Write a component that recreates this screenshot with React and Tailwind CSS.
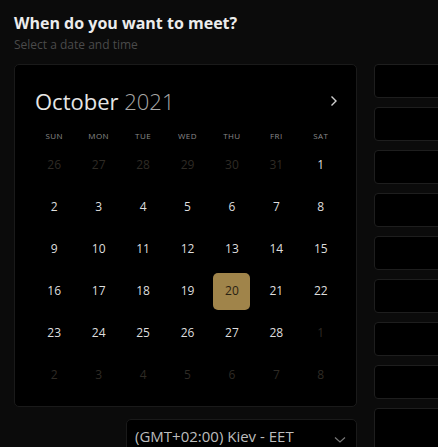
import React from 'react';

const weekdays = ['SUN', 'MON', 'TUE', 'WED', 'THU', 'FRI', 'SAT'];

const days = [
  [26, 27, 28, 29, 30, 31, 1],
  [2, 3, 4, 5, 6, 7, 8],
  [9, 10, 11, 12, 13, 14, 15],
  [16, 17, 18, 19, 20, 21, 22],
  [23, 24, 25, 26, 27, 28, 1],
  [2, 3, 4, 5, 6, 7, 8],
];

const isOutside = (row, d) => (row === 0 && d > 7) || (row >= 4 && d < 15);

const App = () => {
  return (
    <div
      className="w-[438px] h-[447px] overflow-hidden bg-[#0b0b0b] pl-[14px] pt-[12px]"
      style={{ fontFamily: '"Open Sans", "Noto Sans", sans-serif' }}
    >
      <h1 className="text-[16px] leading-[22px] font-bold text-[#ececec]">When do you want to meet?</h1>
      <p className="text-[12px] leading-[18px] mt-[2px] text-[#4a4a4a]">Select a date and time</p>

      <div className="flex gap-[17px] mt-[10px]">
        <div className="w-[343px] shrink-0 flex flex-col">
          <div className="h-[343px] rounded-[5px] border border-[#1a1a1a] bg-black pl-[17px] pr-[13px] pt-[21px]">
            <div className="flex items-center justify-between h-[30px] pl-[3px] pr-[5px]">
              <div className="text-[22px] leading-[30px] text-[#e6e6e6]">
                October <span className="text-[#a8a8a8] font-light">2021</span>
              </div>
              <svg width="9" height="12" viewBox="0 0 9 12" fill="none">
                <path d="M2.5 1.5 L7 6 L2.5 10.5" stroke="#d0d0d0" strokeWidth="1.4" />
              </svg>
            </div>
            <div className="grid grid-cols-7 mt-[12px] h-[16px] items-center">
              {weekdays.map(w => (
                <div key={w} className="text-center text-[8px] tracking-[0.4px] text-[#8a8a8a]">{w}</div>
              ))}
            </div>
            <div className="grid grid-cols-7">
              {days.map((row, ri) =>
                row.map((d, ci) => {
                  const selected = ri === 3 && d === 20;
                  const outside = isOutside(ri, d);
                  return (
                    <div key={`${ri}-${ci}`} className="h-[42px] flex items-center justify-center">
                      {selected ? (
                        <div className="w-[37px] h-[37px] rounded-[5px] bg-[#a0844a] flex items-center justify-center text-[12px] text-[#2a2212]">
                          {d}
                        </div>
                      ) : (
                        <span className={`text-[12px] ${outside ? 'text-[#2f2b25]' : 'text-[#dedede]'}`}>{d}</span>
                      )}
                    </div>
                  );
                })
              )}
            </div>
          </div>
          <div className="flex justify-end mt-[12px]">
            <div className="w-[231px] h-[40px] rounded-[5px] border border-[#1a1a1a] bg-black flex items-start justify-between pl-[8px] pr-[10px] pt-[6px]">
              <span className="text-[15px] leading-[20px] text-[#bdbdbd]">(GMT+02:00) Kiev - EET</span>
              <svg width="12" height="8" viewBox="0 0 12 8" fill="none" className="mt-[10px]">
                <path d="M1 1.5 L6 6 L11 1.5" stroke="#777" strokeWidth="1.2" />
              </svg>
            </div>
          </div>
        </div>

        <div className="w-[120px] shrink-0 flex flex-col gap-[9px]">
          {Array.from({ length: 8 }).map((_, i) => (
            <div key={i} className="h-[34px] rounded-[4px] border border-[#1e1e1e] bg-black" />
          ))}
          <div className="h-[60px] rounded-[4px] border border-[#1e1e1e] bg-black" />
        </div>
      </div>
    </div>
  );
};

export default App;
